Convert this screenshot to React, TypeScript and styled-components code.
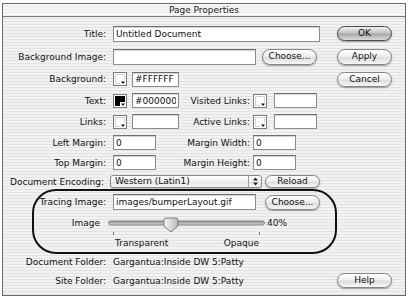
import React from 'react'
import styled, { createGlobalStyle, css } from 'styled-components'

const GlobalStyle = createGlobalStyle`
  html, body {
    margin: 0;
    padding: 0;
    background: #ffffff;
  }
  body {
    font-family: 'DejaVu Sans', 'Liberation Sans', sans-serif;
    font-size: 9px;
    color: #111;
  }
`

const pinstripe = css`
  background: repeating-linear-gradient(
    to bottom,
    #f2f2f2 0px,
    #f2f2f2 2px,
    #e3e3e3 2px,
    #e3e3e3 3px
  );
`

const S = {
  Window: styled.div`
    position: relative;
    box-sizing: border-box;
    margin: 3px 0 0 2px;
    width: 404px;
    height: 293px;
    border: 1px solid #6a6a6a;
    ${pinstripe}
  `,
  TitleBar: styled.div`
    height: 12px;
    line-height: 12px;
    border-bottom: 1px solid #7a7a7a;
    text-align: center;
    font-size: 9px;
    color: #1a1a1a;
    background: repeating-linear-gradient(
      to bottom,
      #f7f7f7 0px,
      #f7f7f7 2px,
      #e9e9e9 2px,
      #e9e9e9 3px
    );
  `,
  Form: styled.div`
    padding-top: 5px;
  `,
  Row: styled.div<{ $h: number }>`
    display: grid;
    grid-template-columns: 110px 224px 55px;
    height: ${(p) => p.$h}px;
    align-items: center;
  `,
  Label: styled.div<{ $pad?: number }>`
    text-align: right;
    padding-right: ${(p) => p.$pad ?? 7}px;
    white-space: nowrap;
  `,
  Controls: styled.div<{ $gap?: number; $shift?: number }>`
    display: flex;
    align-items: center;
    gap: ${(p) => p.$gap ?? 6}px;
    margin-left: ${(p) => p.$shift ?? 0}px;
    white-space: nowrap;
  `,
  Field: styled.input<{ $w: number; $h?: number }>`
    box-sizing: border-box;
    width: ${(p) => p.$w}px;
    height: ${(p) => p.$h ?? 15}px;
    margin: 0;
    padding: 0 2px;
    border: 1px solid #8c8c8c;
    border-top-color: #6e6e6e;
    box-shadow: inset 0 1px 1px rgba(0, 0, 0, 0.18);
    background: #fff;
    font-family: 'DejaVu Sans', 'Liberation Sans', sans-serif;
    font-size: 9px;
    color: #111;
    outline: none;
  `,
  Button: styled.button<{ $w?: number; $h?: number; $default?: boolean }>`
    box-sizing: border-box;
    width: ${(p) => p.$w ?? 55}px;
    height: ${(p) => p.$h ?? 15}px;
    margin: 0;
    padding: 0;
    border: 1px solid ${(p) => (p.$default ? '#4a4a4a' : '#858585')};
    border-radius: 8px;
    background: ${(p) =>
      p.$default
        ? 'linear-gradient(#f0f0f0, #c4c4c4 45%, #a9a9a9 55%, #dcdcdc)'
        : 'linear-gradient(#ffffff, #efefef 45%, #dddddd 55%, #f7f7f7)'};
    box-shadow: 0 1px 1.5px rgba(0, 0, 0, 0.35);
    font-family: 'DejaVu Sans', 'Liberation Sans', sans-serif;
    font-size: 9px;
    line-height: 1;
    color: #111;
  `,
  Side: styled.div`
    display: flex;
    align-items: center;
  `,
  Swatch: styled.div<{ $fill: string }>`
    position: relative;
    box-sizing: border-box;
    width: 14px;
    height: 14px;
    border: 1px solid #7d7d7d;
    background: #fff;
    padding: 1px;
    flex: none;

    &::before {
      content: '';
      display: block;
      width: 100%;
      height: 100%;
      background: ${(p) => p.$fill};
      border: ${(p) => (p.$fill === '#fff' ? '1px solid #d4d4d4' : 'none')};
      box-sizing: border-box;
    }

    svg {
      position: absolute;
      right: 0;
      bottom: 0;
      display: block;
    }
  `,
  Pair: styled.div`
    display: grid;
    grid-template-columns: 66px 74px auto;
    align-items: center;
  `,
  PairFirst: styled.div`
    display: flex;
    align-items: center;
    gap: 5px;
  `,
  PairLabel: styled.div`
    text-align: right;
    padding-right: 3px;
    white-space: nowrap;
  `,
  PairSecond: styled.div`
    display: flex;
    align-items: center;
    gap: 7px;
  `,
  Select: styled.div`
    box-sizing: border-box;
    display: flex;
    align-items: stretch;
    width: 152px;
    height: 13px;
    border: 1px solid #8a8a8a;
    border-radius: 3px;
    background: linear-gradient(#ffffff, #efefef 50%, #e2e2e2 55%, #f6f6f6);
    box-shadow: 0 1px 1px rgba(0, 0, 0, 0.25);
    overflow: hidden;
  `,
  SelectText: styled.div`
    flex: 1;
    padding-left: 4px;
    line-height: 11px;
  `,
  SelectArrows: styled.div`
    width: 12px;
    border-left: 1px solid #a0a0a0;
    display: flex;
    align-items: center;
    justify-content: center;
  `,
  Percent: styled.div`
    margin-left: -1px;
  `,
  Scale: styled.div`
    display: flex;
    justify-content: space-between;
    width: 144px;
    margin-left: 2px;
  `,
  Callout: styled.div`
    position: absolute;
    left: 29px;
    top: 185px;
    width: 305px;
    height: 65px;
    box-sizing: border-box;
    border: 2px solid #111;
    border-radius: 24px;
    pointer-events: none;
  `
}

const Swatch: React.FC<{ fill: string }> = ({ fill }) => (
  <S.Swatch $fill={fill}>
    <svg width={6} height={5} viewBox='0 0 6 5'>
      <rect x={0} y={0} width={6} height={5} fill='#fff' />
      <path d='M1 1.5 H5 L3 4 Z' fill='#111' />
    </svg>
  </S.Swatch>
)

const Slider: React.FC<{ value: number }> = ({ value }) => {
  const len = 156
  const x = (len * value) / 100 + 0.5
  return (
    <svg width={160} height={20} style={{ overflow: 'visible', display: 'block' }}>
      <defs>
        <linearGradient id='trk' x1='0' y1='0' x2='0' y2='1'>
          <stop offset='0' stopColor='#8d8d8d' />
          <stop offset='0.5' stopColor='#b4b4b4' />
          <stop offset='1' stopColor='#d4d4d4' />
        </linearGradient>
        <linearGradient id='thm' x1='0' y1='0' x2='1' y2='0'>
          <stop offset='0' stopColor='#f4f4f4' />
          <stop offset='1' stopColor='#bdbdbd' />
        </linearGradient>
      </defs>
      <rect x={0.5} y={8} width={len} height={4} rx={2} fill='url(#trk)' stroke='#777' strokeWidth={0.8} />
      <line x1={5.5} y1={19} x2={5.5} y2={22} stroke='#777' />
      <line x1={151.5} y1={19} x2={151.5} y2={22} stroke='#777' />
      <path
        d={`M${x - 5},5 h10 a2,2 0 0 1 2,2 v6 l-7,6 l-7,-6 v-6 a2,2 0 0 1 2,-2z`}
        fill='url(#thm)'
        stroke='#6d6d6d'
        strokeWidth={0.9}
      />
    </svg>
  )
}

const Arrows = () => (
  <svg width={7} height={9} viewBox='0 0 7 9'>
    <path d='M3.5 0.5 L6 3.5 H1 Z' fill='#222' />
    <path d='M3.5 8.5 L6 5.5 H1 Z' fill='#222' />
  </svg>
)

export default function App() {
  return (
    <>
      <GlobalStyle />
      <S.Window>
        <S.TitleBar>Page Properties</S.TitleBar>
        <S.Form>
          <S.Row $h={23}>
            <S.Label>Title:</S.Label>
            <S.Controls>
              <S.Field $w={207} $h={16} readOnly value='Untitled Document' />
            </S.Controls>
            <S.Side>
              <S.Button $default>OK</S.Button>
            </S.Side>
          </S.Row>

          <S.Row $h={23}>
            <S.Label>Background Image:</S.Label>
            <S.Controls>
              <S.Field $w={143} $h={16} readOnly value='' />
              <S.Button $h={16}>Choose...</S.Button>
            </S.Controls>
            <S.Side>
              <S.Button $h={16}>Apply</S.Button>
            </S.Side>
          </S.Row>

          <S.Row $h={22}>
            <S.Label>Background:</S.Label>
            <S.Pair>
              <S.PairFirst>
                <Swatch fill='#fff' />
                <S.Field $w={47} readOnly value='#FFFFFF' />
              </S.PairFirst>
            </S.Pair>
            <S.Side>
              <S.Button>Cancel</S.Button>
            </S.Side>
          </S.Row>

          <S.Row $h={21}>
            <S.Label>Text:</S.Label>
            <S.Pair>
              <S.PairFirst>
                <Swatch fill='#000' />
                <S.Field $w={47} readOnly value='#000000' />
              </S.PairFirst>
              <S.PairLabel>Visited Links:</S.PairLabel>
              <S.PairSecond>
                <Swatch fill='#fff' />
                <S.Field $w={43} readOnly value='' />
              </S.PairSecond>
            </S.Pair>
          </S.Row>

          <S.Row $h={21}>
            <S.Label>Links:</S.Label>
            <S.Pair>
              <S.PairFirst>
                <Swatch fill='#fff' />
                <S.Field $w={47} readOnly value='' />
              </S.PairFirst>
              <S.PairLabel>Active Links:</S.PairLabel>
              <S.PairSecond>
                <Swatch fill='#fff' />
                <S.Field $w={43} readOnly value='' />
              </S.PairSecond>
            </S.Pair>
          </S.Row>

          <S.Row $h={21}>
            <S.Label>Left Margin:</S.Label>
            <S.Pair>
              <S.PairFirst>
                <S.Field $w={43} readOnly value='0' />
              </S.PairFirst>
              <S.PairLabel>Margin Width:</S.PairLabel>
              <S.PairSecond>
                <S.Field $w={43} readOnly value='0' />
              </S.PairSecond>
            </S.Pair>
          </S.Row>

          <S.Row $h={19}>
            <S.Label>Top Margin:</S.Label>
            <S.Pair>
              <S.PairFirst>
                <S.Field $w={43} readOnly value='0' />
              </S.PairFirst>
              <S.PairLabel>Margin Height:</S.PairLabel>
              <S.PairSecond>
                <S.Field $w={43} readOnly value='0' />
              </S.PairSecond>
            </S.Pair>
          </S.Row>

          <S.Row $h={19}>
            <S.Label $pad={9}>Document Encoding:</S.Label>
            <S.Controls $shift={-3} $gap={3}>
              <S.Select>
                <S.SelectText>Western (Latin1)</S.SelectText>
                <S.SelectArrows>
                  <Arrows />
                </S.SelectArrows>
              </S.Select>
              <S.Button $h={13}>Reload</S.Button>
            </S.Controls>
          </S.Row>

          <S.Row $h={22}>
            <S.Label>Tracing Image:</S.Label>
            <S.Controls $gap={9}>
              <S.Field $w={143} $h={16} readOnly value='images/bumperLayout.gif' />
              <S.Button $h={15}>Choose...</S.Button>
            </S.Controls>
          </S.Row>

          <S.Row $h={20}>
            <S.Label $pad={13}>Image</S.Label>
            <S.Controls $shift={-5} $gap={0}>
              <Slider value={40} />
              <S.Percent>40%</S.Percent>
            </S.Controls>
          </S.Row>

          <S.Row $h={20}>
            <div />
            <S.Scale>
              <span>Transparent</span>
              <span>Opaque</span>
            </S.Scale>
          </S.Row>

          <S.Row $h={17}>
            <S.Label>Document Folder:</S.Label>
            <S.Controls>Gargantua:Inside DW 5:Patty</S.Controls>
          </S.Row>

          <S.Row $h={21}>
            <S.Label>Site Folder:</S.Label>
            <S.Controls>Gargantua:Inside DW 5:Patty</S.Controls>
            <S.Side>
              <S.Button>Help</S.Button>
            </S.Side>
          </S.Row>
        </S.Form>
        <S.Callout />
      </S.Window>
    </>
  )
}
